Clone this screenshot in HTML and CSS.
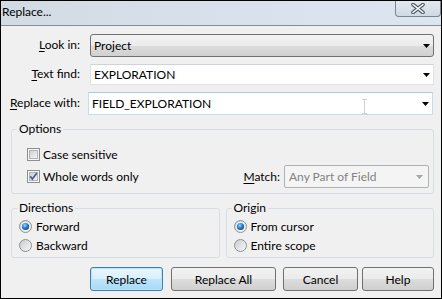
FILE: index.html
```html
<!DOCTYPE html>
<html>
<head>
<meta charset="utf-8">
<link rel="stylesheet" href="styles.css">
</head>
<body>
<div class="window">
  <div class="titlebar">
    <span class="title">Replace...</span>
    <div class="close">
      <svg class="xicon" width="16" height="11" viewBox="0 0 16 11">
        <path d="M3 1.5 L13 9.5 M13 1.5 L3 9.5" stroke="#4a5562" stroke-width="3.6" stroke-linecap="round" fill="none"/>
        <path d="M3 1.5 L13 9.5 M13 1.5 L3 9.5" stroke="#ffffff" stroke-width="1.6" stroke-linecap="round" fill="none"/>
      </svg>
    </div>
  </div>
  <div class="content">
    <div class="fields">
      <span class="label"><span><u>L</u>ook in:</span></span>
      <div class="combo"><span class="val">Project</span><svg class="arrow" width="7" height="4" viewBox="0 0 7 4"><path d="M0 0 H7 L3.5 4 Z" fill="#000"/></svg></div>
      <span class="label"><span><u>T</u>ext find:</span></span>
      <div class="edit"><span class="val">EXPLORATION</span><svg class="arrow" width="7" height="4" viewBox="0 0 7 4"><path d="M0 0 H7 L3.5 4 Z" fill="#000"/></svg></div>
      <span class="label"><span><u>R</u>eplace with:</span></span>
      <div class="edit focus"><span class="val">FIELD_EXPLORATION</span><span class="ibeam"></span><svg class="arrow" width="7" height="4" viewBox="0 0 7 4"><path d="M0 0 H7 L3.5 4 Z" fill="#000"/></svg></div>
    </div>

    <fieldset class="group options">
      <legend>Options</legend>
      <div class="opt-body">
        <div class="check-row">
          <svg class="cb" width="13" height="13" viewBox="0 0 13 13">
            <defs>
              <linearGradient id="cbfill" x1="0" y1="0" x2="1" y2="1"><stop offset="0" stop-color="#c9cdd3"/><stop offset="1" stop-color="#f7f7f7"/></linearGradient>
              <linearGradient id="rfill" x1="0" y1="0" x2="1" y2="1"><stop offset="0" stop-color="#c6c9ce"/><stop offset="1" stop-color="#fbfbfb"/></linearGradient>
              <radialGradient id="rdot" cx="0.4" cy="0.35" r="0.75"><stop offset="0" stop-color="#9bdcff"/><stop offset="0.45" stop-color="#2a86d6"/><stop offset="1" stop-color="#0c3d78"/></radialGradient>
            </defs>
            <rect x="0.5" y="0.5" width="12" height="12" fill="#f5f5f5" stroke="#8e8f8f"/>
            <rect x="2.5" y="2.5" width="8" height="8" fill="url(#cbfill)" stroke="#b1b5ba"/>
          </svg>
          <span>Case sensitive</span>
        </div>
        <div class="check-row match-row">
          <svg class="cb" width="13" height="13" viewBox="0 0 13 13">
            <rect x="0.5" y="0.5" width="12" height="12" fill="#f5f5f5" stroke="#8e8f8f"/>
            <rect x="2.5" y="2.5" width="8" height="8" fill="url(#cbfill)" stroke="#b1b5ba"/>
            <path d="M3.3 6.2 L5.4 9 L9.8 3" stroke="#4c5f93" stroke-width="1.7" fill="none"/>
          </svg>
          <span class="grow">Whole words only</span>
          <span class="mlabel"><u>M</u>atch:</span>
          <div class="combo disabled"><span class="val">Any Part of Field</span><svg class="arrow" width="7" height="4" viewBox="0 0 7 4"><path d="M0 0 H7 L3.5 4 Z" fill="#a6a6a6"/></svg></div>
        </div>
      </div>
    </fieldset>

    <div class="pair">
      <fieldset class="group">
        <legend>Directions</legend>
        <div class="radio-body">
          <div class="radio-row">
            <svg class="rb" width="13" height="13" viewBox="0 0 13 13">
              <circle cx="6.5" cy="6.5" r="6" fill="url(#rfill)" stroke="#8f9194"/>
              <circle cx="6.5" cy="6.5" r="4.6" fill="#f4f4f4"/>
              <circle cx="6.5" cy="6.5" r="3.6" fill="url(#rdot)"/>
            </svg>
            <span>Forward</span>
          </div>
          <div class="radio-row">
            <svg class="rb" width="13" height="13" viewBox="0 0 13 13">
              <circle cx="6.5" cy="6.5" r="6" fill="url(#rfill)" stroke="#8f9194"/>
            </svg>
            <span>Backward</span>
          </div>
        </div>
      </fieldset>
      <fieldset class="group">
        <legend>Origin</legend>
        <div class="radio-body">
          <div class="radio-row">
            <svg class="rb" width="13" height="13" viewBox="0 0 13 13">
              <circle cx="6.5" cy="6.5" r="6" fill="url(#rfill)" stroke="#8f9194"/>
              <circle cx="6.5" cy="6.5" r="4.6" fill="#f4f4f4"/>
              <circle cx="6.5" cy="6.5" r="3.6" fill="url(#rdot)"/>
            </svg>
            <span>From cursor</span>
          </div>
          <div class="radio-row">
            <svg class="rb" width="13" height="13" viewBox="0 0 13 13">
              <circle cx="6.5" cy="6.5" r="6" fill="url(#rfill)" stroke="#8f9194"/>
            </svg>
            <span>Entire scope</span>
          </div>
        </div>
      </fieldset>
    </div>

    <div class="buttons">
      <button class="btn default w-replace">Replace</button>
      <button class="btn w-all">Replace All</button>
      <button class="btn w-cancel">Cancel</button>
      <button class="btn w-help">Help</button>
    </div>
  </div>
</div>
</body>
</html>
```
FILE: styles.css
```css
* { box-sizing: border-box; }
html, body { margin: 0; padding: 0; }
body {
  width: 442px;
  height: 299px;
  background: #f0f0f0;
  font-family: "Segoe UI", Lato, "Noto Sans", sans-serif;
  font-size: 12px;
  color: #000;
}
.window {
  width: 442px;
  height: 299px;
  border: 1px solid #000;
  display: flex;
  flex-direction: column;
  background: #f0f0f0;
}
.titlebar {
  height: 25px;
  flex: none;
  display: flex;
  align-items: flex-start;
  justify-content: space-between;
  background: linear-gradient(to right, #d2dae4, #d9e2ec 55%, #dde6f0);
  border-bottom: 1px solid #868d96;
}
.title {
  padding: 3px 0 0 1px;
  line-height: 16px;
}
.close {
  width: 46px;
  height: 16px;
  border: 1px solid #7a8594;
  border-top: none;
  border-radius: 0 0 4px 4px;
  background: linear-gradient(#e3e9f0, #d0d9e4);
  display: flex;
  align-items: center;
  justify-content: center;
}
.content {
  flex: 1;
  padding: 8px 7px 0 10px;
  display: flex;
  flex-direction: column;
}
.fields {
  display: grid;
  grid-template-columns: 69px 1fr;
  grid-template-rows: 23px 21px 23px;
  column-gap: 10px;
  row-gap: 7px;
  align-items: center;
}
.label {
  display: flex;
  justify-content: flex-end;
  white-space: nowrap;
  margin-top: -2px;
}
.label u, .mlabel u { text-decoration-thickness: 1px; text-underline-offset: 2px; }
.combo, .edit {
  height: 100%;
  display: flex;
  align-items: center;
  padding-left: 3px;
  position: relative;
}
.combo {
  border: 1px solid #707070;
  border-radius: 3px;
  background: linear-gradient(#f3f3f3 0, #ebebeb 50%, #dddddd 50%, #d0d0d0 100%);
}
.edit {
  background: #fff;
  border: 1px solid #dde3e9;
  border-top-color: #cdd3d9;
}
.edit.focus {
  margin-left: -2px;
  margin-right: 1px;
  border-color: #c5dbf0;
  border-top-color: #a9c8e6;
}
.val { flex: 1; white-space: nowrap; }
.arrow { margin-right: 3px; flex: none; }
.ibeam {
  position: absolute;
  left: 273px;
  top: 6px;
  width: 5px;
  height: 15px;
  border-top: 1px solid #d2d2d2;
  border-bottom: 1px solid #d2d2d2;
}
.ibeam::after {
  content: "";
  position: absolute;
  left: 2px;
  top: 0;
  bottom: 0;
  width: 1px;
  background: #d2d2d2;
}
.group {
  margin: 0;
  padding: 0;
  border: 1px solid #d5dfe5;
  border-radius: 3px;
  min-width: 0;
}
.group legend {
  padding: 0 2px;
  margin-left: 5px;
  line-height: 16px;
}
.options { margin-top: 6px; }
.opt-body { padding: 7px 4px 5px 15px; }
.check-row {
  display: flex;
  align-items: center;
  height: 21px;
}
.match-row { height: 23px; }
.cb { flex: none; margin-right: 3px; }
.grow { flex: 1; }
.mlabel { margin-right: 4px; }
.combo.disabled {
  width: 145px;
  height: 23px;
  border: 1px solid #adb2b5;
  border-radius: 2px;
  background: #f4f4f4;
  color: #838383;
  padding-left: 4px;
}
.combo.disabled .arrow { margin-right: 5px; }
.pair {
  display: flex;
  gap: 6px;
  margin-top: 6px;
}
.pair .group { flex: 1; }
.radio-body { padding: 1px 4px 2px 7px; }
.radio-row {
  display: flex;
  align-items: center;
  height: 19px;
}
.rb { flex: none; margin-right: 4px; }
.buttons {
  display: flex;
  justify-content: flex-end;
  margin-top: 9px;
}
.btn {
  height: 24px;
  padding: 0;
  font: inherit;
  color: #000;
  border: 1px solid #707070;
  border-radius: 3px;
  background: linear-gradient(#f2f2f2 0, #ebebeb 50%, #dddddd 50%, #cfcfcf 100%);
}
.btn.default {
  border-color: #3c7fb1;
  background: linear-gradient(#eaf6fd 0, #d9f0fc 50%, #bee6fd 50%, #a7d9f5 100%);
  box-shadow: inset 0 0 0 1px #b9e4f9;
}
.w-replace { width: 73px; }
.w-all { width: 105px; margin-left: 8px; }
.w-cancel { width: 75px; margin-left: 7px; }
.w-help { width: 72px; margin-left: 4px; }
```
